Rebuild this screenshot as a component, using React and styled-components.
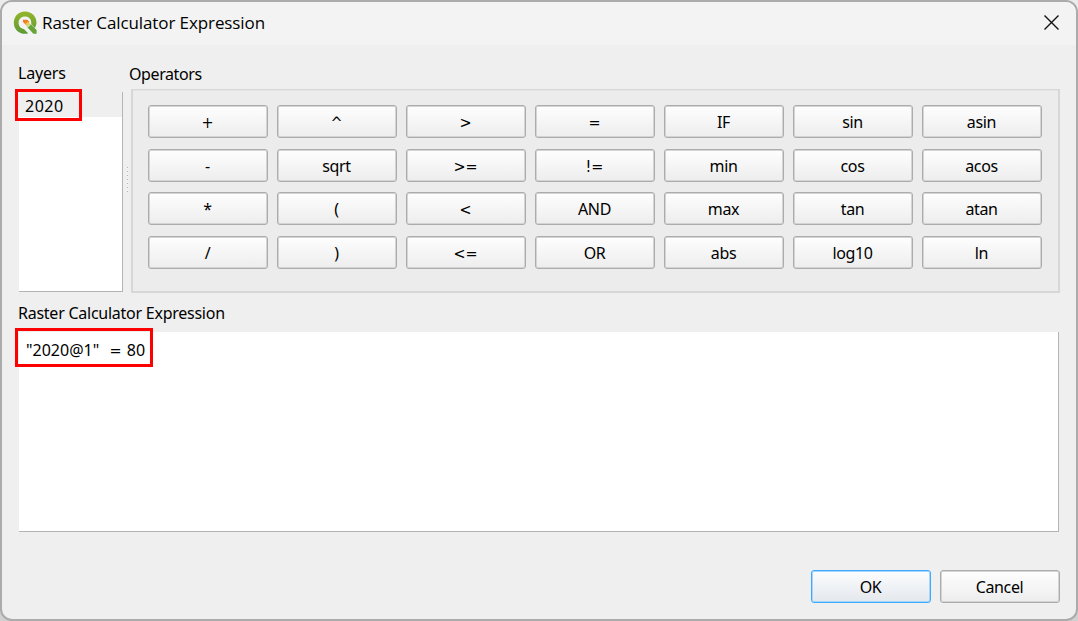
import React from "react";
import styled, { createGlobalStyle } from "styled-components";

const Global = createGlobalStyle`
  * { box-sizing: border-box; }
  html, body { margin: 0; padding: 0; background: #dedede; overflow: hidden; }
`;

const Backdrop = styled.div`
  width: 1078px;
  height: 621px;
  background: linear-gradient(#ececec, #d0d0d0);
`;

const Dialog = styled.div`
  height: 621px;
  display: flex;
  flex-direction: column;
  border: 2px solid #ababab;
  border-radius: 12px;
  background: #efefef;
  color: #000;
  font: 16px/20px "Noto Sans", sans-serif;
  overflow: hidden;
`;

const TitleBar = styled.header`
  height: 43px;
  flex: none;
  display: flex;
  align-items: center;
  padding: 0 17px 2px 11px;
  background: #f3f3f3;
`;

const Title = styled.h1`
  flex: 1;
  margin: 0 0 0 5px;
  font: 400 17px/24px "Open Sans", sans-serif;
  letter-spacing: ${(p) => p.$track}px;
`;

const CloseButton = styled.button`
  display: flex;
  border: 0;
  padding: 0;
  background: none;
`;

const Content = styled.main`
  flex: 1;
  display: flex;
  flex-direction: column;
  padding: 18px 16px 16px;
`;

const Text = styled.span`
  display: block;
  white-space: pre;
  letter-spacing: ${(p) => p.$track || 0}px;
  word-spacing: ${(p) => p.$gap || 0}px;
`;

const MathGlyphs = styled.span`
  font-family: "DejaVu Sans Condensed", "DejaVu Sans", sans-serif;
  font-stretch: condensed;
  letter-spacing: 0;
`;

const TopPanels = styled.div`
  display: flex;
  height: 230px;
`;

const LayersPanel = styled.section`
  width: 105px;
  padding-left: 1px;
`;

const Caption = styled.div`
  height: ${(p) => p.$height}px;
  padding-top: ${(p) => p.$top || 0}px;
  margin-left: ${(p) => p.$shift || 0}px;
`;

const LayerList = styled.div`
  position: relative;
  height: 200px;
  background: #fff;
  border: solid #b4b4b4;
  border-width: 0 1px 1px 0;
`;

const LayerItem = styled.div`
  height: 25px;
  padding: 4px 0 0 6px;
  background: #efefef;
`;

const Highlight = styled.div`
  position: absolute;
  left: ${(p) => p.$left}px;
  top: ${(p) => p.$top}px;
  width: ${(p) => p.$width}px;
  height: ${(p) => p.$height}px;
  border: 3px solid #fe0000;
  pointer-events: none;
`;

const Splitter = styled.div`
  width: 8px;
  display: flex;
  align-items: flex-start;
  justify-content: center;
  padding-top: 104px;
`;

const Grip = styled.div`
  width: 1px;
  height: 25px;
  background: repeating-linear-gradient(#b4b4b4 0 1px, #f7f7f7 1px 2px, transparent 2px 4px);
`;

const OperatorsPanel = styled.section`
  flex: 1;
`;

const OperatorsFrame = styled.div`
  display: grid;
  grid-template-columns: repeat(7, 120px);
  grid-template-rows: 44px 43px 44px 33px;
  column-gap: 9px;
  height: 204px;
  padding: 15px 0 0 15px;
  border: 2px solid #d7d7d7;
  border-top-width: 1px;
  box-shadow: inset 0 1px 0 #e5e5e5;
  background: #ececec;
`;

const PushButton = styled.button`
  width: 120px;
  height: 33px;
  padding: 1px 1px 0 0;
  border: 1px solid ${(p) => (p.$primary ? "#3daaff" : "#acacac")};
  border-radius: 3px;
  background: ${(p) => (p.$primary ? "linear-gradient(#fcfdfe, #e3e8ed)" : "linear-gradient(#fefefe, #ededed)")};
  box-shadow: inset 0 0 0 1px ${(p) => (p.$primary ? "#a6d6fb" : "#d4d4d4")};
  color: #000;
  font: inherit;
  letter-spacing: ${(p) => p.$track || 0}px;
`;

const Editor = styled.div`
  position: relative;
  width: 1040px;
  height: 200px;
  margin-left: 1px;
  padding: 8px 0 0 7px;
  background: #fff;
  border: solid #b4b4b4;
  border-width: 0 1px 1px 0;
`;

const Actions = styled.footer`
  display: flex;
  justify-content: flex-end;
  gap: 9px;
  margin-top: auto;
`;

const operators = [
  "+", "^", ">", "=", "IF", "sin", "asin",
  "-", "sqrt", ">=", "!=", "min", "cos", "acos",
  "*", "(", "<", "AND", "max", "tan", "atan",
  "/", ")", "<=", "OR", "abs", "log10", "ln",
];

const isMath = (op) => /^[+^<>=!]+$/.test(op);

const QgisLogo = () => (
  <svg width="24" height="24" viewBox="0 0 24 24">
    <defs>
      <linearGradient id="ring" x1="0" y1="0" x2="0" y2="1">
        <stop offset="0" stopColor="#94b52a" />
        <stop offset="1" stopColor="#5c9b35" />
      </linearGradient>
    </defs>
    <path
      fill="url(#ring)"
      d="M12.3 .5C5.6 .2 .8 5.4 .8 11.7S5.6 22.8 12 22.8q1.8 0 3.2-.5l-4.3-4.4C7.6 17.6 5.6 15 5.6 11.7c0-3.6 2.6-6.3 6.4-6.3s6.3 2.7 6.3 6.3l-.1 1.4 3.7 3.8q1.6-2.3 1.6-5.2C23.500 5.400 18.800 .7 12.300 .5z"
    />
    <path fill="#66a436" d="M14.300 16.200 17.600 13 23.600 19v3.800h-3.200z" />
    <path fill="#c6dd9a" d="M13 14.600 16 11.900 17.900 13.700 14.800 16.700z" />
    <path fill="#ee7e25" d="M10 8.700h4.300l2.200 2.300-3.200 3.300-1-1-2.300-2.200z" />
    <path fill="#f8c24a" d="M12.400 12.800 15 10.400 16.600 12 13.700 14.700z" />
  </svg>
);

export default function App() {
  return (
    <Backdrop>
      <Global />
      <Dialog>
        <TitleBar>
          <QgisLogo />
          <Title $track={-0.1}>Raster Calculator Expression</Title>
          <CloseButton aria-label="Close">
            <svg width="15" height="15" viewBox="0 0 15 15" fill="none" stroke="#111" strokeWidth="1.4">
              <path d="M.5 .5 14.5 14.5M14.5 .5 .5 14.5" />
            </svg>
          </CloseButton>
        </TitleBar>
        <Content>
          <TopPanels>
            <LayersPanel>
              <Caption $height={29} $shift={-1}>
                <Text $track={-0.2}>Layers</Text>
              </Caption>
              <LayerList>
                <LayerItem>
                  <Text $track={0.5}>2020</Text>
                </LayerItem>
                <Highlight $left={-4} $top={-3} $width={67} $height={32} />
              </LayerList>
            </LayersPanel>
            <Splitter>
              <Grip />
            </Splitter>
            <OperatorsPanel>
              <Caption $height={26} $top={1} $shift={-2}>
                <Text $track={-0.4}>Operators</Text>
              </Caption>
              <OperatorsFrame>
                {operators.map((op) => (
                  <PushButton key={op} $track={-0.35}>
                    {isMath(op) ? <MathGlyphs>{op}</MathGlyphs> : op}
                  </PushButton>
                ))}
              </OperatorsFrame>
            </OperatorsPanel>
          </TopPanels>
          <Caption $height={39} $top={10}>
            <Text $track={-0.25}>Raster Calculator Expression</Text>
          </Caption>
          <Editor>
            <Text $gap={1}>
              {'"2020@1"  '}
              <MathGlyphs>=</MathGlyphs>
              {" 80"}
            </Text>
            <Highlight $left={-4} $top={-4} $width={138} $height={39} />
          </Editor>
          <Actions>
            <PushButton $primary $track={-0.35}>OK</PushButton>
            <PushButton $track={-0.35}>Cancel</PushButton>
          </Actions>
        </Content>
      </Dialog>
    </Backdrop>
  );
}
